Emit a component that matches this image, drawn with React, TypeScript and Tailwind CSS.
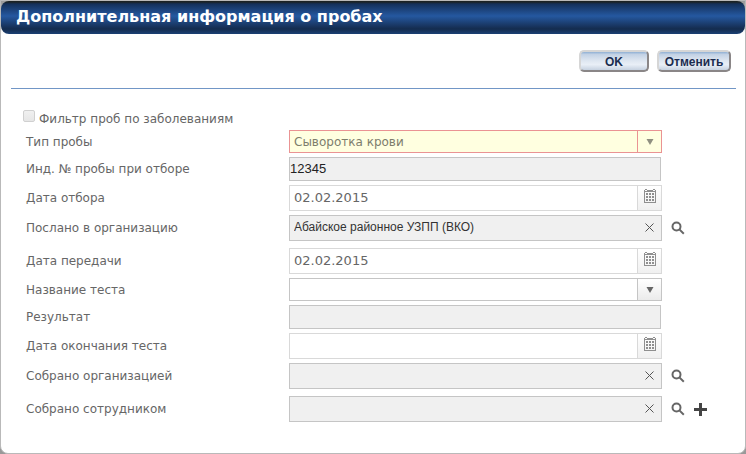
import type { ReactNode } from "react";

const inset = "min-w-0 flex-1 bg-transparent outline-none";
const verdana = "font-['DejaVu_Sans',Verdana,sans-serif]";
const arial = "font-['Liberation_Sans',Arial,sans-serif]";

function SearchIcon() {
  return (
    <svg width="14" height="14" viewBox="0 0 14 14" fill="none" stroke="#666" aria-hidden="true">
      <circle cx="5.5" cy="5.5" r="4" strokeWidth="2" />
      <path d="M8.4 8.4L12.8 12.8" strokeWidth="2" />
    </svg>
  );
}

function PlusIcon() {
  return (
    <svg width="13" height="13" viewBox="0 0 13 13" aria-hidden="true">
      <path d="M5 0h3v5h5v3h-5v5h-3v-5h-5v-3h5z" fill="#444" />
    </svg>
  );
}

function CalendarIcon() {
  return (
    <svg width="12" height="14" viewBox="0 0 12 14" shapeRendering="crispEdges" fill="#8f8f8f" aria-hidden="true">
      <path d="M0 1h1v13H0zM11 1h1v13h-1zM0 13h12v1H0zM1 2h10v1H1zM3 1h6v1H3zM1 0h2v1H1zM9 0h2v1H9z" />
      <path d="M2 4h2v2H2zM5 4h2v2H5zM8 4h2v2H8zM2 7h2v2H2zM5 7h2v2H5zM8 7h2v2H8zM2 10h2v2H2zM5 10h2v2H5zM8 10h2v2H8z" />
    </svg>
  );
}

function ClearIcon() {
  return (
    <svg width="9" height="9" viewBox="0 0 9 9" stroke="#555" strokeWidth="1" aria-hidden="true">
      <path d="M0.5 0.5L8.5 8.5M8.5 0.5L0.5 8.5" />
    </svg>
  );
}

function Row({ id, label, children, actions, tall }: {
  id: string;
  label: string;
  children: ReactNode;
  actions?: ReactNode;
  tall?: boolean;
}) {
  return (
    <div className={tall ? "flex items-center pb-[3px]" : "flex items-center"}>
      <label htmlFor={id} className="w-[263px] shrink-0">{label}</label>
      <div className="flex min-w-0 flex-1">{children}</div>
      <div className="flex w-[73px] shrink-0 items-center gap-[9px] pl-[9px]">{actions}</div>
    </div>
  );
}

function SelectField({ id, options, required }: { id: string; options: string[]; required?: boolean }) {
  return (
    <div className={required
      ? "relative flex h-[23px] flex-1 border border-[#ea9393] bg-[#ffffe0] text-[#7d7d6c]"
      : "relative flex h-[23px] flex-1 border border-[#c5c5c5] bg-white text-[#666]"}>
      <select id={id} required={required} className={`${inset} appearance-none pl-1 text-xs`}>
        {options.map((o) => <option key={o}>{o}</option>)}
      </select>
      <span className={required
        ? "pointer-events-none absolute inset-y-0 right-0 flex w-6 items-center justify-center border-l border-[#ea9393] text-[#8f8f80]"
        : "pointer-events-none absolute inset-y-0 right-0 flex w-6 items-center justify-center border-l border-[#c5c5c5] bg-linear-to-b from-white to-[#ebebeb] text-[#666]"}>
        <svg width="8" height="6" viewBox="0 0 8 6" fill="currentColor" aria-hidden="true"><path d="M0.5 0h7L4 6z" /></svg>
      </span>
    </div>
  );
}

function DateField({ id, value }: { id: string; value: string }) {
  return (
    <div className="flex h-[26px] flex-1 border border-[#d9d9d9] bg-white">
      <input id={id} type="text" defaultValue={value} className={`${inset} pl-1 text-[13px] text-[#666]`} />
      <button type="button" aria-label="Календарь" className="flex w-6 justify-center border-l border-[#d9d9d9] bg-linear-to-b from-white to-[#f0f0f0] pt-[3px]">
        <CalendarIcon />
      </button>
    </div>
  );
}

function ReadOnlyField({ id, value }: { id: string; value: string }) {
  return (
    <input id={id} type="text" readOnly defaultValue={value}
      className={`${arial} mr-px h-6 min-w-0 flex-1 border border-[#c5c5c5] bg-[#f0f0f0] pb-[2px] text-[13px] text-[#222] outline-none`} />
  );
}

function LookupField({ id, value }: { id: string; value: string }) {
  return (
    <div className="flex h-[26px] flex-1 border border-[#c5c5c5] bg-[#f0f0f0]">
      <input id={id} type="text" readOnly defaultValue={value} className={`${inset} ${arial} pb-[2px] pl-1 text-xs text-[#333]`} />
      <button type="button" aria-label="Очистить" className="flex w-6 items-center justify-center pb-[2px]">
        <ClearIcon />
      </button>
    </div>
  );
}

function SearchButton() {
  return <button type="button" aria-label="Поиск"><SearchIcon /></button>;
}

const dialogButton =
  "flex h-[22px] items-center justify-center rounded-[5px] border-2 border-t-[#d6d6d6] border-r-[#8a8687] border-b-[#8a8687] border-l-[#d6d6d6] bg-[linear-gradient(to_bottom,#8fb0d4_0%,#c3d2e5_14%,#dfe7f1_50%,#e9eff7_70%,#c6d1e0_100%)] pt-px text-xs font-bold text-[#1b2c4f]";

export default function App() {
  return (
    <div className={`${verdana} min-h-screen bg-[#999] text-xs text-[#666]`}>
      <div className="flex min-h-screen flex-col rounded-b-lg border border-[#b9b9b9] bg-white">
        <header className="bg-linear-to-b from-[#999] to-white">
          <h1 className="h-[33px] rounded-lg bg-[linear-gradient(to_bottom,#1b2224_0px,#1b2224_1px,#14305a_3px,#2558a0_15px,#17325a_26px,#142c4e_28px,#1b4074_33px)] pl-[15px] text-base leading-8 font-bold text-white">
            Дополнительная информация о пробах
          </h1>
        </header>
        <form className="pr-[9px] pl-[10px]" onSubmit={(e) => e.preventDefault()}>
          <div className={`${arial} flex justify-end gap-2 border-b border-[#7196c6] pt-4 pr-[5px] pb-4`}>
            <button type="submit" className={`${dialogButton} w-[70px]`}>OK</button>
            <button type="button" className={`${dialogButton} w-[74px]`}>Отменить</button>
          </div>
          <div className="flex items-center gap-1 pt-[21px] pl-3">
            <input id="filter" type="checkbox" disabled
              className="mb-[6px] size-3 appearance-none rounded-[2px] border border-[#d0d0d0] bg-linear-to-b from-[#f0f0f0] to-[#e6e6e6]" />
            <label htmlFor="filter" className="leading-[18px]">Фильтр проб по заболеваниям</label>
          </div>
          <div className="flex flex-col gap-1 pt-[2px] pr-px pl-[15px]">
            <Row id="type" label="Тип пробы"><SelectField id="type" options={["Сыворотка крови"]} required /></Row>
            <Row id="number" label="Инд. № пробы при отборе"><ReadOnlyField id="number" value="12345" /></Row>
            <Row id="collected" label="Дата отбора"><DateField id="collected" value="02.02.2015" /></Row>
            <Row id="sent" label="Послано в организацию" tall actions={<SearchButton />}>
              <LookupField id="sent" value="Абайское районное УЗПП (ВКО)" />
            </Row>
            <Row id="handed" label="Дата передачи"><DateField id="handed" value="02.02.2015" /></Row>
            <Row id="test" label="Название теста"><SelectField id="test" options={[""]} /></Row>
            <Row id="result" label="Результат"><ReadOnlyField id="result" value="" /></Row>
            <Row id="finished" label="Дата окончания теста"><DateField id="finished" value="" /></Row>
            <Row id="org" label="Собрано организацией" tall actions={<SearchButton />}><LookupField id="org" value="" /></Row>
            <Row id="person" label="Собрано сотрудником"
              actions={<><SearchButton /><button type="button" aria-label="Добавить"><PlusIcon /></button></>}>
              <LookupField id="person" value="" />
            </Row>
          </div>
        </form>
      </div>
    </div>
  );
}
